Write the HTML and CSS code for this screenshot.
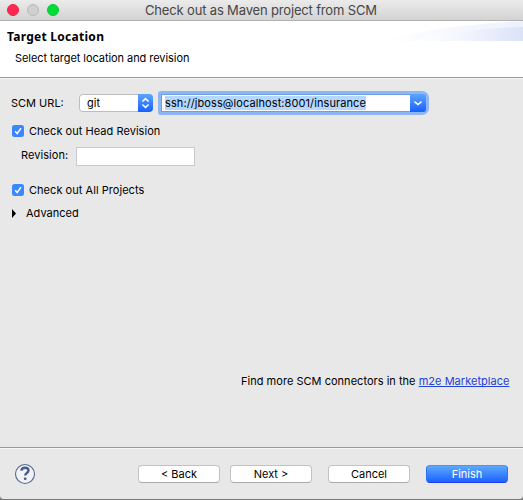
FILE: index.html
```html
<!DOCTYPE html>
<html lang="en">
<head>
<meta charset="utf-8">
<title>Check out as Maven project from SCM</title>
<link rel="stylesheet" href="styles.css">
</head>
<body>
<div class="window">
  <header class="titlebar">
    <div class="lights"><i class="light close"></i><i class="light minimize"></i><i class="light maximize"></i></div>
    <span class="title">Check out as Maven project from SCM</span>
  </header>
  <section class="banner">
    <div>
      <h1>Target Location</h1>
      <p>Select target location and revision</p>
    </div>
    <svg class="swoosh" width="140" height="20" viewBox="0 0 140 20">
      <defs>
        <linearGradient id="sweep"><stop offset="0" stop-color="#fff"/><stop offset=".4" stop-color="#f5f7fe"/><stop offset="1" stop-color="#dce3f9"/></linearGradient>
        <linearGradient id="glow"><stop offset="0" stop-color="#fff"/><stop offset="1" stop-color="#edf1fc"/></linearGradient>
      </defs>
      <path d="M0 20Q55 4 140 0V20Z" fill="url(#glow)"/>
      <path d="M30 20Q75 8 140 6V20Z" fill="url(#sweep)"/>
    </svg>
  </section>
  <main class="form">
    <div class="row url-row">
      <label class="url-label">SCM URL:</label>
      <div class="select"><span>git</span>
        <svg width="15" height="18" viewBox="0 0 15 18"><path d="M4.4 7.5 7.5 4.6l3.1 2.9M4.4 10.5l3.1 2.9 3.1-2.9"/></svg>
      </div>
      <div class="combo"><span class="selected">ssh://jboss@localhost:8001/insurance</span>
        <svg width="16" height="18" viewBox="0 0 16 18"><path d="M4.5 7.7 8 10.6l3.5-2.9"/></svg>
      </div>
    </div>
    <div class="row check-row head-row">
      <svg class="check" width="12" height="12" viewBox="0 0 12 12"><path d="M3.2 6.3 5.2 8.6 9 3.1"/></svg>
      <span class="head-label">Check out Head Revision</span>
    </div>
    <div class="row revision-row"><label>Revision:</label><div class="input"></div></div>
    <div class="row check-row projects-row">
      <svg class="check" width="12" height="12" viewBox="0 0 12 12"><path d="M3.2 6.3 5.2 8.6 9 3.1"/></svg>
      <span class="projects-label">Check out All Projects</span>
    </div>
    <div class="row advanced-row">
      <svg width="4" height="9" viewBox="0 0 4 9"><path d="M0 0 4 4.5 0 9Z"/></svg>
      <span>Advanced</span>
    </div>
    <p class="connectors">Find more SCM connectors in the <a>m2e Marketplace</a></p>
  </main>
  <footer class="actions">
    <svg class="help" width="22" height="22" viewBox="0 0 22 22">
      <circle cx="11" cy="11" r="9.5"/>
      <path d="M7.4 7.6C7.6 5.6 9 4.7 11 4.7c2.2 0 3.5 1.1 3.5 2.9 0 2.4-3.3 2.5-3.3 5"/>
      <rect x="10" y="14.6" width="2.4" height="2.3" rx=".7"/>
    </svg>
    <button class="button back">&lt; Back</button>
    <button class="button next">Next &gt;</button>
    <button class="button cancel">Cancel</button>
    <button class="button finish">Finish</button>
  </footer>
</div>
</body>
</html>
```

FILE: styles.css
```css
* { box-sizing: border-box; }
body { margin: 0; background: #777; font: 11px/14px Inter, sans-serif; color: #000; }
.window { width: 523px; height: 500px; display: flex; flex-direction: column; background: #e8e8e8; border-bottom: 1px solid #777; border-radius: 0 0 4px 4px; overflow: hidden; }
h1, p { margin: 0; }
.titlebar { height: 21px; flex: none; display: grid; grid-template-columns: 145px 1fr; align-items: center; background: linear-gradient(#ebebeb, #d3d3d3); border-bottom: 1px solid #b1b1b1; }
.lights { display: flex; gap: 8px; padding-left: 7px; }
.light { width: 12px; height: 12px; border-radius: 50%; }
.close { background: #ff2851; border: 1px solid #ea2449; }
.minimize { background: #d0d0d0; border: 1px solid #bababa; }
.maximize { background: #00dc38; border: 1px solid #08c835; }
.title { font-size: 13px; line-height: 20px; letter-spacing: -.16px; color: #464646; white-space: nowrap; }
.banner { height: 57px; flex: none; display: flex; justify-content: space-between; background: #fff; border-bottom: 1px solid #9a9a9a; }
h1 { font: bold 12px/16px "Noto Sans", sans-serif; letter-spacing: .27px; padding: 8px 0 0 7px; }
.banner p { padding: 6px 0 0 15px; letter-spacing: -.06px; }
.swoosh { display: block; }
.form { flex: 1; border-top: 1px solid #f6f6f6; padding-top: 12px; display: flex; flex-direction: column; }
.row { display: flex; flex: none; align-items: center; white-space: nowrap; }
.url-row { height: 24px; padding-left: 11px; }
.url-label { width: 68px; }
.select { width: 74px; height: 18px; display: flex; align-items: center; justify-content: space-between; padding-left: 8px; background: #fff; border-radius: 4px; box-shadow: inset 0 0 0 1px #bdbdbd; overflow: hidden; }
.select svg, .combo svg { display: block; background: linear-gradient(#5ca5fd, #1760ff); }
.select path, .combo path, .check path { fill: none; stroke: #fff; stroke-width: 1.5; }
.combo { width: 265px; height: 18px; margin-left: 8px; display: flex; align-items: center; justify-content: space-between; padding-left: 3px; background: #fff; border: 1px solid #6c9de9; border-right: 0; border-radius: 1px 4px 4px 1px; box-shadow: 0 0 0 3px #8fb5f2; }
.combo svg { height: 18px; border-radius: 0 3px 3px 0; }
.selected { background: #b3d7ff; letter-spacing: .09px; }
.check-row { height: 14px; padding-left: 12px; gap: 5px; letter-spacing: .04px; }
.check { border-radius: 2.5px; background: #3b88fd; }
.head-row { margin-top: 9px; }
.revision-row { height: 19px; padding-left: 21px; margin-top: 9px; }
.revision-row label { width: 55px; margin-top: -3px; letter-spacing: .07px; }
.input { width: 119px; height: 19px; background: #fff; border: 1px solid #cacaca; }
.projects-row { margin-top: 17px; }
.advanced-row { height: 14px; padding-left: 12px; gap: 10px; margin-top: 9px; }
.connectors { margin: 154px 0 0 241px; letter-spacing: .025px; white-space: nowrap; }
a { color: #2441d8; text-decoration: underline; text-decoration-skip-ink: none; text-underline-offset: 1px; }
.actions { height: 52px; flex: none; display: flex; align-items: center; border-top: 1px solid #9a9a9a; box-shadow: inset 0 1px #f8f8f8; padding-left: 14px; }
.help { margin-right: 102px; }
.help circle { fill: #f0f2f6; stroke: #536491; stroke-width: 1.1; }
.help path { fill: none; stroke: #4a5c8c; stroke-width: 2.4; }
.help rect { fill: #4a5c8c; }
.button { width: 82px; height: 18px; padding: 0; border: 1px solid #c2c2c2; border-bottom-color: #aaa; border-radius: 4px; background: #fff; font: inherit; line-height: 16px; color: #000; }
.next { margin-left: 10px; }
.cancel { margin-left: 16px; }
.finish { margin-left: 16px; color: #fff; background: linear-gradient(#5ea8fe, #1c62ff); border-color: #4a94f8 #2c72f8 #1a3ff5; }
```
